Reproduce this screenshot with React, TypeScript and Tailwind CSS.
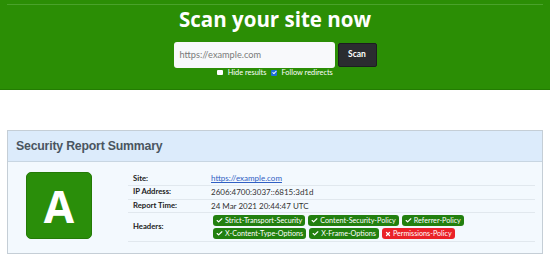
import { Check, X } from "lucide-react";

const rows = [
  { label: "Site:", value: "https://example.com", link: true },
  { label: "IP Address:", value: "2606:4700:3037::6815:3d1d" },
  { label: "Report Time:", value: "24 Mar 2021 20:44:47 UTC" },
];

const headers = [
  [
    { name: "Strict-Transport-Security", ok: true },
    { name: "Content-Security-Policy", ok: true },
    { name: "Referrer-Policy", ok: true },
  ],
  [
    { name: "X-Content-Type-Options", ok: true },
    { name: "X-Frame-Options", ok: true },
    { name: "Permissions-Policy", ok: false },
  ],
];

function Badge({ name, ok }: { name: string; ok: boolean }) {
  return (
    <span
      className={`flex items-center gap-[2px] h-[10.5px] px-[3px] rounded-[3px] text-white text-[7.2px] leading-none ${
        ok ? "bg-[#22800f]" : "bg-[#ea2229]"
      }`}
    >
      {ok ? <Check className="w-[7px] h-[7px]" strokeWidth={4} /> : <X className="w-[6px] h-[6px]" strokeWidth={5} />}
      {name}
    </span>
  );
}

export default function App() {
  return (
    <div className="w-[550px] h-[255px] bg-white overflow-hidden" style={{ fontFamily: "Lato, sans-serif" }}>
      {/* Scan banner */}
      <div className="bg-[#2b8e05] h-[90px] border-b border-[#237c02] pt-[4px]">
        <div className="mx-[7px] h-px bg-[#4aa22b]" />
        <h1
          className="text-center text-white font-bold text-[20.5px] leading-none mt-[4px]"
          style={{ fontFamily: '"Open Sans", sans-serif' }}
        >
          Scan your site now
        </h1>
        <div className="flex justify-center gap-[3px] mt-[12px]">
          <div className="w-[161px] h-[26px] rounded-[3px] bg-[#f8f9fb] flex items-center px-[6px] text-[9.2px] text-[#7a7a7a]">
            https://example.com
          </div>
          <div className="w-[39px] h-[24px] mt-[1px] rounded-[2px] bg-[#2b2c30] border border-[#1c1d20] flex items-center justify-center text-white font-bold text-[8.5px]">
            Scan
          </div>
        </div>
        <div className="flex justify-center items-center h-[9px] mt-[0.5px] text-[7.4px] text-white">
          <span className="w-[5.5px] h-[5.5px] bg-white rounded-[1px] mr-[5px]" />
          <span>Hide results</span>
          <span className="w-[6px] h-[6px] bg-[#1e6fd9] rounded-[1px] flex items-center justify-center ml-[5px] mr-[4px]">
            <Check className="w-[5px] h-[5px] text-white" strokeWidth={5} />
          </span>
          <span>Follow redirects</span>
        </div>
      </div>

      {/* Summary card */}
      <div className="mx-[7px] mt-[40px] border border-[#c5ced6] bg-[#f3f9fe]">
        <div className="h-[31px] bg-[#dcebfb] border-b border-[#c8d6e2] flex items-center px-[8px]">
          <span
            className="text-[12.3px] font-bold text-[#4a5560] tracking-[-0.2px]"
            style={{ fontFamily: '"Liberation Sans", Arial, sans-serif' }}
          >
            Security Report Summary
          </span>
        </div>
        <div className="flex pt-[10px] pb-[11px]">
          <div
            className="w-[66px] h-[67px] ml-[18px] rounded-[5px] bg-[#2a8e0a] border border-[#237a06] flex items-center justify-center text-white font-bold text-[44px] leading-none"
            style={{ fontFamily: '"Open Sans", sans-serif' }}
          >
            A
          </div>
          <div className="ml-[36px] w-[407px] text-[8px] text-[#222]">
            {rows.map((r) => (
              <div key={r.label} className="flex items-center h-[13.75px] border-b border-[#e1e8ee]">
                <span className="w-[83px] pl-[5px] font-bold text-[7.7px]">{r.label}</span>
                <span className={r.link ? "text-[#2f5fc4] underline" : "text-[#333]"}>{r.value}</span>
              </div>
            ))}
            <div className="flex items-center h-[28.5px] border-b border-[#e1e8ee]">
              <span className="w-[83px] pl-[5px] font-bold text-[7.7px]">Headers:</span>
              <div className="flex flex-col gap-[2.5px] ml-[2px]">
                {headers.map((line, i) => (
                  <div key={i} className="flex gap-[3px]">
                    {line.map((h) => (
                      <Badge key={h.name} name={h.name} ok={h.ok} />
                    ))}
                  </div>
                ))}
              </div>
            </div>
          </div>
        </div>
      </div>
    </div>
  );
}
